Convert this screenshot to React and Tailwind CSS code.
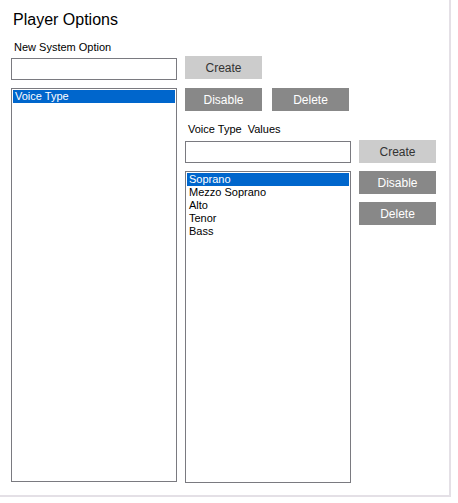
import React from 'react'

const font = { fontFamily: '"Liberation Sans", Arial, sans-serif' }

function Btn({ children, dark, className = '' }) {
  const tone = dark ? 'bg-[#888888] text-white' : 'bg-[#cccccc] text-[#333333]'
  return (
    <button className={`w-[77px] h-[23px] text-[12px] leading-none ${tone} ${className}`}>
      {children}
    </button>
  )
}

function ListBox({ items, selected, className = '' }) {
  return (
    <div className={`border border-[#7a7a80] bg-white p-px ${className}`}>
      {items.map((it, i) => (
        <div
          key={it}
          className={`h-[13px] leading-[13px] text-[11px] pl-[2px] ${i === selected ? 'bg-[#0066cc] text-white' : 'text-black'}`}
        >
          {it}
        </div>
      ))}
    </div>
  )
}

export default function App() {
  const values = ['Soprano', 'Mezzo Soprano', 'Alto', 'Tenor', 'Bass']

  return (
    <div className="w-[458px] h-[503px] bg-white" style={font}>
      <div className="w-[451px] h-[497px] border-r-2 border-b-2 border-[#e4e0e6] bg-white">
        <div className="pl-[13px] pt-[10px] h-[40px] text-[16px] leading-[20px] text-black">Player Options</div>
        <div className="pl-[14px] h-[15px] text-[11px] leading-[14px] text-black">New System Option</div>

        <div className="flex gap-[8px] pl-[11px] pt-[1px]">
          {/* left column */}
          <div className="flex flex-col w-[166px] pt-[2px]">
            <input className="h-[22px] w-[166px] border border-[#7a7a80] bg-white outline-none" />
            <ListBox items={['Voice Type']} selected={0} className="mt-[8px] h-[394px]" />
          </div>

          {/* right column */}
          <div className="flex flex-col">
            <Btn>Create</Btn>
            <div className="flex gap-[10px] mt-[9px]">
              <Btn dark>Disable</Btn>
              <Btn dark>Delete</Btn>
            </div>
            <div className="pl-[3px] mt-[11px] h-[18px] text-[11px] leading-[14px] text-black whitespace-pre">Voice Type  Values</div>
            <div className="flex gap-[8px] items-center">
              <input className="h-[22px] w-[166px] border border-[#7a7a80] bg-white outline-none" />
              <Btn>Create</Btn>
            </div>
            <div className="flex gap-[8px] mt-[8px]">
              <ListBox items={values} selected={0} className="w-[166px] h-[312px]" />
              <div className="flex flex-col gap-[8px]">
                <Btn dark>Disable</Btn>
                <Btn dark>Delete</Btn>
              </div>
            </div>
          </div>
        </div>
      </div>
    </div>
  )
}
